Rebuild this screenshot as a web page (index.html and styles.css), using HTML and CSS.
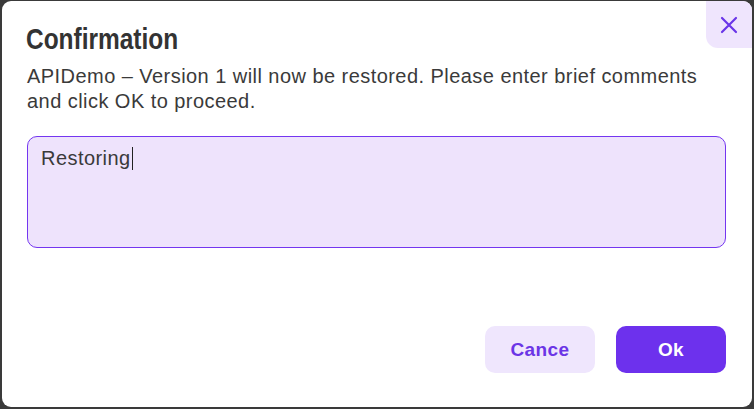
FILE: index.html
```html
<!DOCTYPE html>
<html lang="en">
<head>
    <meta charset="UTF-8">
    <meta name="viewport" content="width=device-width, initial-scale=1.0">
    <title>Confirmation</title>
    <link rel="stylesheet" href="styles.css">
</head>
<body>
<div class="dialog">
    <button class="close-btn" aria-label="Close">
        <svg width="18" height="18" viewBox="0 0 18 18">
            <path d="M2 2 L16 16 M16 2 L2 16" stroke="#6a35e8" stroke-width="2.2" stroke-linecap="round"/>
        </svg>
    </button>
    <h1 class="title">Confirmation</h1>
    <p class="message">APIDemo – Version 1 will now be restored. Please enter brief comments and click OK to proceed.</p>
    <div class="comments">Restoring<span class="caret"></span></div>
    <div class="actions">
        <button class="btn btn-cancel">Cance</button>
        <button class="btn btn-ok">Ok</button>
    </div>
</div>
</body>
</html>
```

FILE: styles.css
```css
/* General Styles */
body {
    margin: 0;
    padding: 0;
    background: #3a3a3a;
    font-family: 'Liberation Sans', Arial, sans-serif;
    color: #333;
}

/* Dialog */
.dialog {
    position: relative;
    box-sizing: border-box;
    margin: 1px 2px 2px 2px;
    height: 406px;
    padding: 21px 26px 0 24px;
    background: #fff;
    border-radius: 9px;
    display: flex;
    flex-direction: column;
}

.close-btn {
    position: absolute;
    top: 0;
    right: 0;
    width: 46px;
    height: 47px;
    border: none;
    padding: 0;
    background: #efe5fd;
    border-radius: 0 9px 0 12px;
    display: flex;
    align-items: center;
    justify-content: center;
}

/* Condensed heading: stretch Liberation Sans down to a narrow face */
.title {
    margin: 0;
    font-family: 'Liberation Sans', Arial, sans-serif;
    font-weight: bold;
    font-size: 30px;
    line-height: 34px;
    color: #333;
    transform: scaleX(0.815);
    transform-origin: left center;
}

.message {
    margin: 8px 0 0 1px;
    font-size: 20px;
    letter-spacing: 0.45px;
    line-height: 25px;
    color: #3a3a3a;
}

/* Comments box */
.comments {
    margin: 22px 0 0 1px;
    height: 112px;
    box-sizing: border-box;
    padding: 9px 13px;
    background: #eee3fc;
    border: 1px solid #7436f0;
    border-radius: 10px;
    font-size: 20px;
    letter-spacing: 0.45px;
    line-height: 24px;
    color: #3a3a3a;
}

.caret {
    display: inline-block;
    width: 1px;
    height: 23px;
    margin-left: 1px;
    background: #222;
    vertical-align: -5px;
}

/* Buttons */
.actions {
    margin-top: 78px;
    display: flex;
    justify-content: flex-end;
    gap: 21px;
}

.btn {
    width: 110px;
    height: 47px;
    border: none;
    border-radius: 10px;
    font-family: 'Liberation Sans', Arial, sans-serif;
    font-size: 19px;
    letter-spacing: 0.4px;
    font-weight: bold;
}

.btn-cancel {
    background: #efe6fd;
    color: #6b35e6;
}

.btn-ok {
    background: #6d31ed;
    color: #fff;
}
```
